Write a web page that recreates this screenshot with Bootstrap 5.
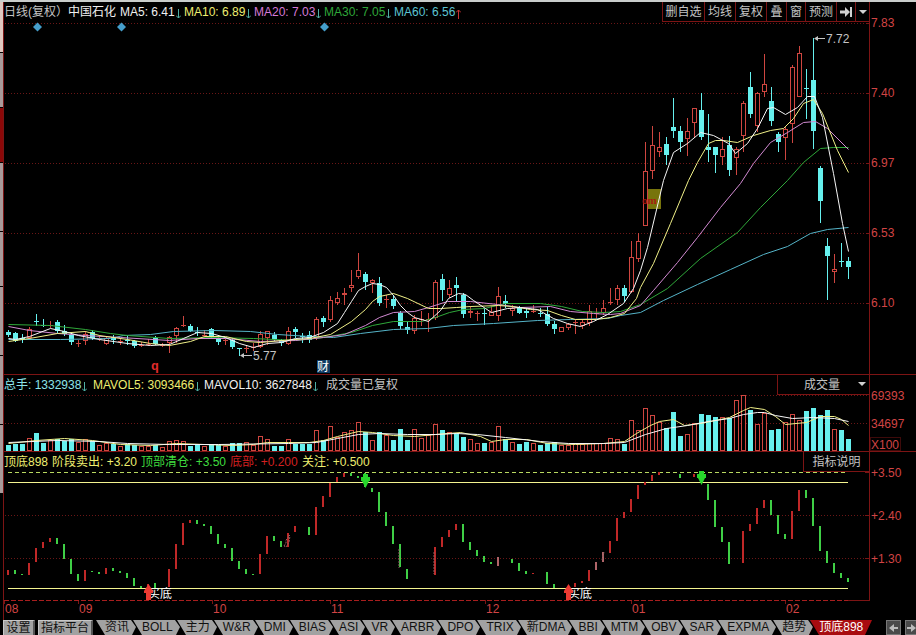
<!DOCTYPE html>
<html lang="zh-CN">
<head>
<meta charset="utf-8">
<meta name="viewport" content="width=device-width, initial-scale=1">
<title>中国石化 日线</title>
<link href="https://cdn.jsdelivr.net/npm/bootstrap@5.3.0/dist/css/bootstrap.min.css" rel="stylesheet">
<style>
:root{--line:#7c1414;--axis:#d24444;--cyan:#66f0ee;--yellow:#eeee70;--grey:#c4c4c4}
body{background:#000;color:var(--grey);font:12px/20px "Liberation Sans","Noto Sans CJK SC",sans-serif;border-top:2px solid #c9cdcb}
.side-strip{width:3px}
.side-strip span{border-bottom:1px solid #000;background:#a99a9a}
.side-strip .s-light{flex:51 0 0;background:#e0c8c0}
.side-strip .s-mid{flex:55 0 0}
.side-strip .s-red{flex:55 0 0;background:#8c0808}
.side-strip .s-long{flex:69 0 0}
.side-strip .s-end{flex:142 0 0;background:#000}
.board{border-left:1px solid var(--line);min-width:0}
.head{height:20px;margin-right:46px;border-right:1px solid var(--line);white-space:nowrap}
.split{border-top:1px solid var(--line)}
.plot{min-height:0;flex-basis:0}
.p-price{flex-grow:352}.p-vol{flex-grow:56}.p-ind{flex-grow:129}
.months{height:19px}
.plot svg,.months svg{display:block;width:100%;height:100%;overflow:visible}
.plot{position:relative}
.plot svg{position:absolute;inset:0}
.w48{width:48px}.w52{width:52px}.w64{width:64px}.w70{width:70px}.w72{width:72px}.w89{width:89px}.w111{width:111px}.w122{width:122px}
.c-white{color:#f0f0f0}.c-yellow{color:var(--yellow)}.c-mag{color:#d77ad7}.c-green{color:#2fa83a}.c-lime{color:#3fdc3f}
.c-cyan{color:#5cc4d4}.c-aqua{color:#8ce4ea}.c-red{color:#d42020}
.arr{width:5px;height:10px;vertical-align:-3px;margin-left:1px;fill:none;stroke:#4fb0a4}
.arr.up{stroke:#c83232}
.tool,.pick{background:#000;color:var(--grey);border:1px solid var(--line);border-width:0 0 1px 1px;padding:0;font-size:12px;line-height:18px;height:20px;border-radius:0}
.t42{width:42px}.t31{width:31px}.t20{width:20px}.t19{width:19px}.t14{width:14px}.t66{width:66px}
.pick-box{position:relative;width:92px}
.pick{appearance:none;width:100%;padding-left:26px;display:block}
.pick-box svg{position:absolute;right:3px;top:7px;pointer-events:none}
.tabs{height:15px;padding-left:0;margin-left:-1px;font-size:12px}
.tabs button{border:0;padding:0;height:15px;line-height:15px;color:#111;background:#a2a2a2;white-space:nowrap;flex:none;display:flex}
.tabs .plain{border:1px solid #c8c8c8;border-width:1px 2px 0 1px;border-right-color:#555;line-height:14px;justify-content:center}
.tabs .b-set{width:32px}.tabs .b-plat{width:55px;margin:0 1px 0 3px}
.tabs .tab{padding-right:2px}
.tabs .active{background:#a80c10;color:#fff;padding-right:0}
.tabs .step{background:#4a4a4a;width:15px;border:1px solid #777;align-items:center;justify-content:center;overflow:hidden}
.tabs .step.cut{width:11px;border-right:0}
</style>
<script src="https://cdn.jsdelivr.net/npm/bootstrap@5.3.0/dist/js/bootstrap.bundle.min.js"></script>
</head>
<body class="vh-100 d-flex overflow-hidden">
<div class="side-strip d-flex flex-column flex-shrink-0" aria-hidden="true"><span class="s-light"></span><span class="s-mid"></span><span class="s-red"></span><span class="s-long"></span><span class="s-mid"></span><span class="s-long"></span><span class="s-long"></span><span class="s-long"></span><span class="s-end"></span></div>
<main class="board flex-grow-1 d-flex flex-column">
  <div class="head d-flex">
    <span class="w64">日线(复权）</span><span class="w52 c-white">中国石化</span>
    <span class="w64 c-white">MA5: 6.41<svg class="arr"><path d="M2.500 0V9M0 6.500L2.500 9L5 6.500"/></svg></span>
    <span class="w70 c-yellow">MA10: 6.89<svg class="arr"><path d="M2.500 0V9M0 6.500L2.500 9L5 6.500"/></svg></span>
    <span class="w70 c-mag">MA20: 7.03<svg class="arr"><path d="M2.500 0V9M0 6.500L2.500 9L5 6.500"/></svg></span>
    <span class="w70 c-green">MA30: 7.05<svg class="arr"><path d="M2.500 0V9M0 6.500L2.500 9L5 6.500"/></svg></span>
    <span class="c-cyan">MA60: 6.56<svg class="arr up"><path d="M2.500 10V1M0 3.500L2.500 1L5 3.500"/></svg></span>
    <div class="d-flex ms-auto">
      <button class="tool t42">删自选</button><button class="tool t31">均线</button><button class="tool t31">复权</button><button class="tool t20">叠</button><button class="tool t19">窗</button><button class="tool t31">预测</button><button class="tool t19" aria-label="最新"><svg width="13" height="12" fill="#d0d0d0"><path d="M0 4.500H5V1L10 6L5 11V7.500H0ZM10 1H12V11H10Z"/></svg></button><button class="tool t14" aria-label="更多"><svg width="8" height="5" fill="#d0d0d0"><path d="M0 0H8L4 4Z"/></svg></button>
    </div>
  </div>
  <div class="plot p-price"><svg id="price" role="img" aria-label="日线"></svg></div>
  <div class="split"></div>
  <div class="head d-flex">
    <span class="w89 c-aqua">总手: 1332938<svg class="arr"><path d="M2.500 0V9M0 6.500L2.500 9L5 6.500"/></svg></span>
    <span class="w111 c-yellow">MAVOL5: 3093466<svg class="arr"><path d="M2.500 0V9M0 6.500L2.500 9L5 6.500"/></svg></span>
    <span class="w122 c-white">MAVOL10: 3627848<svg class="arr"><path d="M2.500 0V9M0 6.500L2.500 9L5 6.500"/></svg></span>
    <span>成交量已复权</span>
    <div class="pick-box ms-auto"><select class="pick" aria-label="副图"><option>成交量</option></select><svg width="8" height="5" fill="#d0d0d0"><path d="M0 0H8L4 4Z"/></svg></div>
  </div>
  <div class="plot p-vol"><svg id="vol" role="img" aria-label="成交量"></svg></div>
  <div class="split"></div>
  <div class="head d-flex">
    <span class="w48 c-yellow">顶底898</span><span class="w89 c-yellow">阶段卖出: +3.20</span><span class="w89 c-lime">顶部清仓: +3.50</span><span class="w72 c-red">底部: +0.200</span><span class="c-yellow">关注: +0.500</span>
    <button class="tool t66 ms-auto">指标说明</button>
  </div>
  <div class="plot p-ind"><svg id="ind" role="img" aria-label="顶底898"></svg></div>
  <div class="months"><svg id="months" role="img" aria-label="月份"></svg></div>
  <nav class="tabs d-flex overflow-hidden" id="tabs"><button class="plain b-set">设置</button><button class="plain b-plat">指标平台</button></nav>
</main>
<script>
// Bar n is centred on x = 8 + 7n of the 916-unit wide board; every value below is a board unit.
// Candle: kind, high, low, body top, body bottom (equal body values draw a doji).
const K=`c 330 337 332 335|c 332 342 333 341|c 334 343 338 338|r 327 340 329 338|c 314 326 321 321|c 319 327 325 325|r 321 328 325 325|c 320 333 322 331|c 325 336 331 334|c 334 345 335 342|r 340 347 343 343|r 331 345 334 341|c 330 340 332 338|r 335 341 338 338|r 336 345 338 344|c 335 344 337 340|r 338 345 341 341|c 336 345 340 340|c 340 348 341 346|r 342 347 345 345|r 339 346 344 344|c 336 345 338 344|r 343 347 345 345|r 336 353 337 343|r 327 343 328 336|r 316 327 325 325|c 324 332 326 331|c 327 336 332 332|r 330 338 335 335|c 328 338 329 336|c 337 345 338 342|r 337 345 340 340|c 338 349 340 347|c 348 356 348 348|r 346 353 348 348|r 343 351 347 347|r 331 348 334 347|r 331 345 331 338|c 332 341 335 339|c 339 346 340 343|r 327 345 331 344|c 327 338 329 332|c 333 343 336 336|c 331 343 335 340|r 317 340 319 338|c 316 327 318 322|r 296 322 300 320|r 292 305 298 303|r 288 305 293 295|r 270 292 285 288|r 253 279 270 277|c 272 290 274 282|r 279 293 280 283|c 277 306 283 303|r 295 308 299 299|c 295 309 299 306|c 311 329 313 326|c 322 334 327 330|r 315 334 318 331|r 311 326 319 319|r 313 332 319 319|r 280 320 282 318|c 274 301 279 290|r 280 298 288 295|c 277 301 285 288|c 293 318 295 314|r 306 318 311 313|r 311 321 313 313|c 308 325 313 313|r 306 316 312 316|r 287 321 296 316|c 295 308 301 304|r 305 316 308 311|c 306 314 308 313|c 308 318 311 313|r 305 313 311 311|c 308 317 313 313|c 307 326 314 324|c 321 334 324 329|r 327 332 327 332|r 323 330 324 328|r 320 334 322 322|r 320 329 322 326|r 305 326 311 323|r 308 319 313 313|r 300 315 308 313|r 288 305 302 302|r 285 305 288 300|c 285 302 288 296|r 241 293 257 292|r 233 262 241 259|r 142 226 171 226|r 126 179 145 171|r 132 157 147 152|c 137 165 144 155|c 98 138 127 131|c 126 152 131 142|r 118 156 131 139|r 84 138 108 123|c 93 140 110 137|c 114 162 147 150|c 147 173 147 155|r 137 165 149 157|c 136 176 145 170|r 147 175 149 158|r 101 152 103 136|c 72 118 87 114|r 92 132 93 126|r 54 97 84 92|c 87 126 101 121|c 132 152 134 142|r 127 160 129 138|r 65 143 67 124|r 46 100 53 97|c 69 119 88 88|c 38 149 80 131|c 166 223 168 201|c 238 300 246 256|r 254 283 269 272|c 243 267 261 261|c 257 279 261 267`.split('|').map(s=>s.split(' '));
// Volume bars: kind + top
const V='c445 c444 c444 r438 c433 c443 r440 c439 c441 c439 r442 r439 c441 r445 r443 c444 r446 c444 c445 r446 r446 c445 r447 r441 r440 r441 c446 c445 r446 c445 c445 r446 c443 c443 r442 r445 r436 r439 c446 c446 r439 c444 c444 c444 r430 c440 r426 r437 r432 r430 r422 c432 r440 c432 r435 c440 c429 c440 r429 r438 r435 r424 c430 r432 c433 c437 r439 r443 c443 r442 r426 c439 r442 c444 c442 r443 c445 c443 c442 r445 r445 r443 r444 r443 r443 r443 r438 r439 c444 r420 r430 r408 r415 r422 c428 c412 c436 r434 r423 c414 c415 c417 r417 c418 r400 r395 c410 r424 r413 c430 c429 r422 r414 r420 c411 c408 c415 c410 r429 c430 c439'.split(' ');
// Indicator bars: index, kind, top, bottom
const I='0r570-575 1g570-574 2g574-575 3r563-575 4r548-562 5r542-548 6r538-542 7g538-544 8g544-559 9g559-574 10g574-581 11r570-581 12g571-572 13g572-574 14r568-574 15g568-571 16g571-573 17g573-578 18g578-586 19g586-588 20r584-589 21g583-588 23r569-587 24r544-569 25r523-545 26r520-523 27g520-524 28g524-526 29g526-534 30g534-544 31g544-548 32g548-561 33g561-569 34g569-574 35g574-575 36r554-574 37r536-554 38g536-541 39g541-547 40r533-547 41r526-532 43g527-535 44r507-535 45r496-507 46r483-497 47r477-482 48r473-477 49g473-476 50g476-478 51g473-487 52g488-492 53g492-512 54g512-526 55g526-544 56g544-567 57g569-579 61r547-575 62r537-547 63r530-537 64r524-530 65g524-542 66g542-550 67g550-556 68g556-562 69g562-564 70p557-566 72g559-563 73g563-571 74g571-574 75r573-574 77g572-584 78g584-588 81r583-587 82r581-583 83r570-581 84p562-570 85p552-562 86r541-553 87r518-541 88r512-518 89r499-512 90r485-499 91r482-485 92r475-481 93r472-475 96g474-478 98r474-477 100g484-500 101g500-527 102g527-542 103g542-564 105r531-563 106r524-531 107r508-524 108r500-508 109g500-515 110g515-534 111g534-539 112r511-539 113r490-511 114g490-498 115g498-526 116g526-551 117g551-563 118g563-573 119g573-578 120g578-582';
const MA={
'#55b4c8':'8,339 60,339 110,338 123,335 150,334 173,331 213,330 250,331 277,334 310,336 333,337 360,333 393,329 427,328 453,325 493,323 537,320 570,319 607,318 620,315 640,312 663,300 697,284 730,269 763,254 787,246 810,233 827,229 848,227',
'#2fa83a':'8,324 50,325 85,329 110,333 127,335 169,338 211,337 253,338 295,340 323,337 351,332 372,325 393,321 421,321 435,317 449,312 463,309 484,308 505,303 540,303 561,306 582,311 603,312 620,311 640,304 667,288 700,258 737,232 760,207 787,180 803,162 820,148 833,147 848,147',
'#d28ad2':'8,326 29,330 57,333 85,335 120,337 169,340 197,338 225,338 260,341 295,340 323,337 344,334 365,325 379,317 393,312 414,311 428,307 447,301 470,301 497,304 520,307 550,306 570,311 593,313 610,314 620,313 640,305 653,290 677,262 697,237 720,207 740,183 753,163 770,142 787,132 803,122 815,121 827,128 848,149',
'#f0f088':'8,341 29,338 57,333 85,331 99,335 127,339 150,343 169,345 190,341 204,336 225,336 246,341 260,342 281,340 309,338 330,334 351,321 365,309 372,301 379,296 393,293 407,298 428,308 440,308 456,307 470,306 498,305 512,306 530,309 547,310 561,315 575,319 596,319 610,317 624,313 636,298 640,287 653,263 670,223 688,180 697,162 708,143 715,140 723,140 737,142 753,135 770,130 783,128 793,118 803,103 813,99 822,113 837,150 848,172',
'#f6f6f6':'8,338 15,339 29,336 50,328 64,331 78,335 99,339 127,343 150,345 169,344 183,338 197,332 211,333 225,337 239,343 253,347 267,343 281,342 295,338 309,337 323,332 337,323 344,312 351,301 358,290 365,286 372,283 379,284 386,287 393,295 400,305 407,312 414,317 428,321 440,310 448,298 458,293 465,294 473,300 485,308 491,312 507,308 520,307 537,309 553,318 567,323 580,326 593,321 607,314 623,303 633,288 640,270 647,247 663,180 673,152 687,143 700,132 713,135 728,143 735,153 747,143 757,128 767,108 773,107 785,114 797,107 807,96 814,96 822,117 833,173 842,223 848,251'};
const MV={
'#f0f088':'8,443 36,440 64,438 92,440 120,444 150,445 176,443 204,444 232,445 253,444 267,442 288,442 309,442 323,440 337,436 358,431 372,432 393,435 414,436 435,434 460,432 480,436 491,441 505,439 526,439 547,443 575,444 603,443 624,441 636,433 650,425 659,421 673,419 684,425 700,423 715,420 729,417 743,410 750,407 764,409 775,416 785,424 806,422 820,416 834,416 841,419 848,425',
'#f6f6f6':'8,442 57,440 99,441 127,443 169,444 218,444 288,443 316,442 337,438 358,434 379,433 407,434 435,434 456,433 477,434 505,437 540,441 568,443 603,443 624,442 645,434 666,428 687,425 708,421 729,418 743,414 757,412 764,412 775,415 792,418 813,417 834,418 848,421'};
const RED='#cf4640',CY='#66f0ee',GR='#3fcf46',LN='#7c1414',DOT='#6a1616';
const kx=n=>8+7*n;

// Small drawing helper bound to one svg; y0/h0 is the part of the board it covers.
function pen(id,y0,h0){
  const el=document.getElementById(id),b=el.getBoundingClientRect();
  const sx=b.width/912,sy=b.height/h0;let out='';
  const X=x=>(x-4)*sx,Y=y=>(y-y0)*sy;
  return{
    rect(x,y,w,h,f){out+=`<rect x="${Math.round(X(x))}" y="${Math.round(Y(y))}" width="${w}" height="${Math.max(1,Math.round(h*sy))}" fill="${f}"/>`},
    box(x,y,w,h,s){out+=`<rect x="${Math.round(X(x))+.5}" y="${Math.round(Y(y))+.5}" width="${w}" height="${Math.max(1,Math.round(h*sy)-1)}" fill="#000" stroke="${s}"/>`},
    line(x1,y1,x2,y2,s,d){const h=Math.round(Y(y1))+.5,v=y1===y2;out+=`<path d="M${v?X(x1):Math.round(X(x1))+.5} ${v?h:Y(y1)}L${v?X(x2):Math.round(X(x2))+.5} ${v?h:Y(y2)}" stroke="${s}" fill="none"${d?` stroke-dasharray="${d}"`:''}/>`},
    curve(p,s){out+=`<polyline points="${p.split(' ').map(q=>{const[a,c]=q.split(',');return X(+a+.5)+','+Y(+c+.5)}).join(' ')}" fill="none" stroke="${s}"/>`},
    text(x,y,t,f,more=''){out+=`<text x="${X(x)}" y="${Y(y)}" fill="${f}" ${more}>${t}</text>`},
    shape(x,y,d,f,more=''){out+=`<path transform="translate(${Math.round(X(x))} ${Math.round(Y(y))})" d="${d}" fill="${f}" ${more}/>`},
    done(){el.innerHTML=out}};
}
function draw(){
  let p=pen('price',22,352);
  [[23,'7.83'],[93,'7.40'],[163,'6.97'],[233,'6.53'],[303,'6.10']].forEach(([y,t])=>{p.line(5,y,869,y,DOT,'1 2');p.line(866,y,869,y,LN);p.text(871,y+4,t,'#d24444')});
  p.line(869,22,869,374,LN);
  [37,121,324].forEach(x=>p.shape(x,27,'M0.500 -4.500L5 0L0.500 4.500L-4 0Z','#459ecb'));
  p.rect(643,189,18,20,'#77740c');
  K.forEach(([k,h,l,t,b],n)=>{const x=kx(n),c=k==='c'?CY:RED;
    if(k==='c'){p.rect(x,+h,1,l-h,c);t===b?p.rect(x-2,+t,5,1,c):p.rect(x-2,+t,5,b-t,c)}
    else if(t===b){p.rect(x,+h,1,l-h,c);p.rect(x-2,+t,5,1,c)}
    else{if(t>h)p.rect(x,+h,1,t-h,c);if(l>b)p.rect(x,+b,1,l-b,c);p.box(x-2,+t,4,b-t,c)}});
  p.text(642,204,'om','#a81c10','style="font:bold 11px \'Liberation Serif\',serif"');
  for(const c in MA)p.curve(MA[c],c);
  p.shape(814,38,'M0 0.500L4 -2V0H11V1H4V3Z','#c4c4c4');p.text(826,43,'7.72','#c4c4c4');
  p.shape(240,355,'M0 0.500L4 -2V0H12V1H4V3Z','#c4c4c4');p.text(253,360,'5.77','#c4c4c4');
  p.text(151,370,'q','#e02c2c','style="font:bold 13px \'Liberation Mono\',monospace"');
  p.rect(317,360,13,13,'#0d3a62');p.text(317,371,'财','#fff');
  p.done();

  p=pen('vol',395,56);
  p.line(5,395,869,395,DOT,'1 2');p.line(5,423,869,423,DOT,'1 2');
  V.forEach((s,n)=>{const t=+s.slice(1),x=kx(n)-2;s[0]==='c'?p.rect(x,t,5,451-t,CY):p.box(x,t,4,451-t,RED)});
  for(const c in MV)p.curve(MV[c],c);
  p.line(869,395,869,452,LN);
  p.text(871,400,'69393','#d24444');p.text(871,428,'34697','#d24444');p.text(871,449,'X100','#d24444');
  p.shape(870,437,'M0.500 0.500H30.500V13.500H0.500Z','none','stroke="#7c1414" stroke-dasharray="1 1"');
  p.done();

  p=pen('ind',472,129);
  [[472,'+3.50'],[515,'+2.40'],[558,'+1.30']].forEach(([y,t])=>{if(y>472)p.line(5,y,869,y,DOT,'1 2');p.line(865,y,869,y,LN);p.text(871,y+5,t,'#d24444')});
  p.line(8,472,848,472,'#b8d860','4 3');
  p.line(8,482,848,482,'#f4f490');p.line(8,588,848,588,'#f4f490');
  I.split(' ').forEach(s=>{const m=s.match(/(\d+)([rgp])(\d+)-(\d+)/);p.rect(kx(+m[1])-1,+m[3],2,m[4]-m[3],{r:'#c02828',g:GR,p:'#b06468'}[m[2]])});
  [[284,'M0 11L2 8V5L4 3L5 0L6 1L5 7L2 12Z',535],[400,'M-1 3V22',546],[434,'M0 0V22',552],[602,'M0 8L2 0',552]].forEach(([x,d,y])=>p.shape(x,y,d,'none','stroke="#8d6060" stroke-dasharray="2 1"'));
  [[365,474],[701,471]].forEach(([x,y])=>p.shape(x,y,'M-2 0H3V3H5V7H4L0.500 14L-3 7H-4V3H-2Z','#28d62c'));
  [148,568].forEach(x=>{p.text(x,598,'买底','#fff');p.shape(x,584,'M0.500 0L5 7V9H3V16H-2V9H-4V7Z','#ee3a32')});
  p.line(869,472,869,601,LN);
  p.line(4,600,848,600,'#a81e1e','5 2');p.line(848,600,869,600,LN);
  p.done();

  p=pen('months',601,19);
  [[5,'08'],[79,'09'],[213,'10'],[331,'11'],[486,'12'],[632,'01'],[786,'02']].forEach(([x,t])=>{p.line(x-1,600,x-1,604,LN);p.text(x,613,t,'#d24444')});
  p.done();
}
const names=['资讯','BOLL','主力','W&amp;R','DMI','BIAS','ASI','VR','ARBR','DPO','TRIX','新DMA','BBI','MTM','OBV','SAR','EXPMA','趋势'];
const nav=document.getElementById('tabs');
nav.insertAdjacentHTML('beforeend',names.map((t,n)=>`<button class="tab"><svg width="11" height="15"><path d="${n?'M0 0H2L11 15H1L5 7Z':'M0 0H2L11 15H0Z'}"/></svg>${t}</button>`).join('')
+'<button class="tab active"><svg width="11" height="15"><path fill="#a2a2a2" d="M0 0H2L5 7L1 15H0Z"/><path d="M0 0H2L11 15H1L5 7Z"/></svg>顶底898<svg width="9" height="15"><path d="M9 0L2 15H9Z"/></svg></button>'
+'<button class="step ms-auto me-1" aria-label="向左"><svg width="9" height="8" fill="#bbb"><path d="M0 4L5 0V3H9V5H5V8Z"/></svg></button><button class="step cut" aria-label="向右"><svg width="9" height="8" fill="#bbb"><path d="M9 4L4 0V3H0V5H4V8Z"/></svg></button>');
draw();
addEventListener('resize',draw);
</script>
</body>
</html>
